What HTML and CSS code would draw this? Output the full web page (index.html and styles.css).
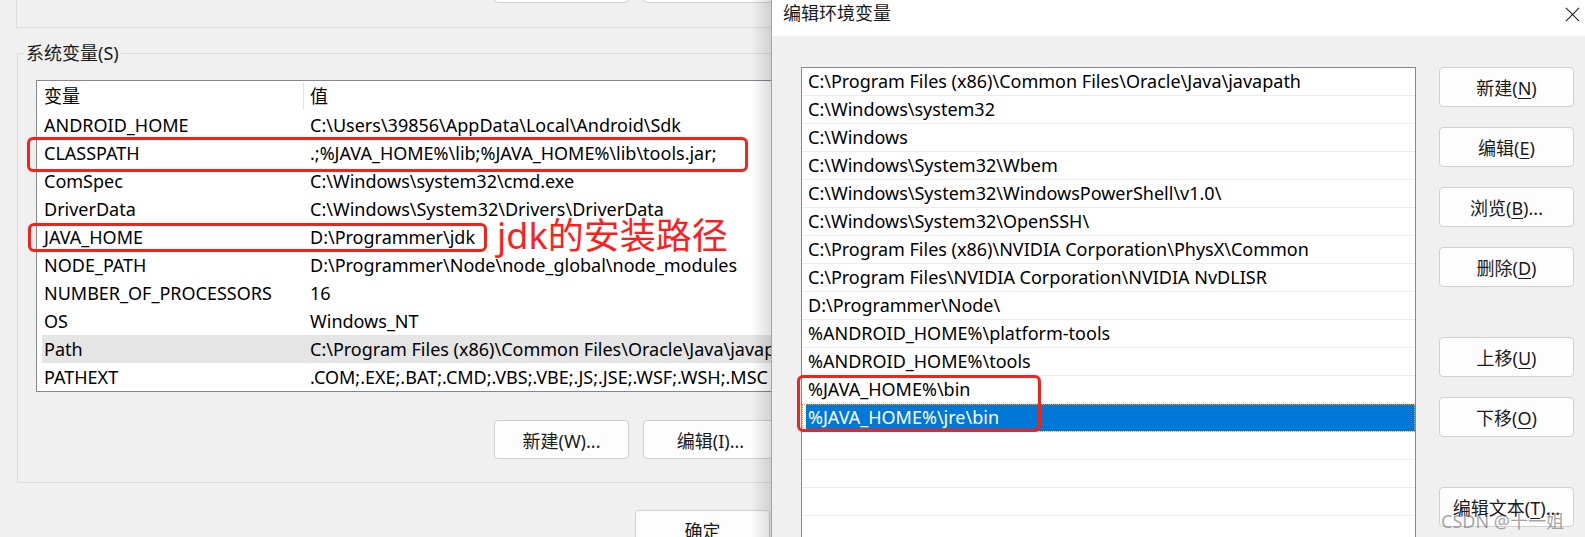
FILE: index.html
```html
<!DOCTYPE html>
<html lang="zh-CN">
  <head>
    <meta charset="UTF-8" />
    <title>环境变量</title>
    <link rel="stylesheet" href="styles.css">
  </head>
  <body>
    <div class="desk">
      <section class="env-dialog">
        <div class="user-group">
          <div class="btn-row">
            <button class="btn">新建(N)...</button>
            <button class="btn">编辑(E)...</button>
          </div>
        </div>

        <fieldset class="sys-group">
          <legend>系统变量(S)</legend>
          <div class="sys-body">
            <div class="var-list">
              <div class="var-head">
                <span class="col-name">变量</span>
                <span class="col-value">值</span>
              </div>
              <div class="var-row"><span class="col-name">ANDROID_HOME</span><span class="col-value">C:\Users\39856\AppData\Local\Android\Sdk</span></div>
              <div class="var-row"><span class="col-name">CLASSPATH</span><span class="col-value">.;%JAVA_HOME%\lib;%JAVA_HOME%\lib\tools.jar;</span></div>
              <div class="var-row"><span class="col-name">ComSpec</span><span class="col-value">C:\Windows\system32\cmd.exe</span></div>
              <div class="var-row"><span class="col-name">DriverData</span><span class="col-value">C:\Windows\System32\Drivers\DriverData</span></div>
              <div class="var-row"><span class="col-name">JAVA_HOME</span><span class="col-value">D:\Programmer\jdk</span></div>
              <div class="var-row"><span class="col-name">NODE_PATH</span><span class="col-value">D:\Programmer\Node\node_global\node_modules</span></div>
              <div class="var-row"><span class="col-name">NUMBER_OF_PROCESSORS</span><span class="col-value">16</span></div>
              <div class="var-row"><span class="col-name">OS</span><span class="col-value">Windows_NT</span></div>
              <div class="var-row is-hover"><span class="col-name">Path</span><span class="col-value">C:\Program Files (x86)\Common Files\Oracle\Java\javapath;C:\Windows\system32</span></div>
              <div class="var-row"><span class="col-name">PATHEXT</span><span class="col-value">.COM;.EXE;.BAT;.CMD;.VBS;.VBE;.JS;.JSE;.WSF;.WSH;.MSC</span></div>
            </div>
            <div class="btn-row">
              <button class="btn">新建(W)...</button>
              <button class="btn">编辑(I)...</button>
              <button class="btn">删除(L)</button>
            </div>
          </div>
        </fieldset>

        <div class="dialog-foot">
          <button class="btn">确定</button>
          <button class="btn">取消</button>
        </div>

        <!-- annotations drawn over the screenshot -->
        <div class="mark mark-classpath"></div>
        <div class="mark mark-java"></div>
        <div class="note">jdk的安装路径</div>
        <div class="shade"></div>
      </section>

      <section class="edit-dialog">
        <header class="titlebar">
          <span class="title">编辑环境变量</span>
          <svg class="close" viewBox="0 0 16 16">
            <line x1="1" y1="1" x2="15" y2="15"></line>
            <line x1="15" y1="1" x2="1" y2="15"></line>
          </svg>
        </header>

        <div class="edit-body">
          <div class="path-list">
            <div class="path-row">C:\Program Files (x86)\Common Files\Oracle\Java\javapath</div>
            <div class="path-row">C:\Windows\system32</div>
            <div class="path-row">C:\Windows</div>
            <div class="path-row">C:\Windows\System32\Wbem</div>
            <div class="path-row">C:\Windows\System32\WindowsPowerShell\v1.0\</div>
            <div class="path-row">C:\Windows\System32\OpenSSH\</div>
            <div class="path-row">C:\Program Files (x86)\NVIDIA Corporation\PhysX\Common</div>
            <div class="path-row">C:\Program Files\NVIDIA Corporation\NVIDIA NvDLISR</div>
            <div class="path-row">D:\Programmer\Node\</div>
            <div class="path-row">%ANDROID_HOME%\platform-tools</div>
            <div class="path-row">%ANDROID_HOME%\tools</div>
            <div class="path-row">%JAVA_HOME%\bin</div>
            <div class="path-row is-selected">%JAVA_HOME%\jre\bin</div>
            <div class="path-row"></div>
            <div class="path-row"></div>
            <div class="path-row"></div>
            <div class="path-row"></div>
          </div>

          <div class="side-btns">
            <button class="btn">新建(<u>N</u>)</button>
            <button class="btn">编辑(<u>E</u>)</button>
            <button class="btn">浏览(<u>B</u>)...</button>
            <button class="btn">删除(<u>D</u>)</button>
            <button class="btn btn-gap">上移(<u>U</u>)</button>
            <button class="btn">下移(<u>O</u>)</button>
            <button class="btn btn-gap">编辑文本(<u>T</u>)...</button>
          </div>
        </div>

        <div class="mark mark-bin"></div>
        <div class="watermark">CSDN @十一姐</div>
      </section>
    </div>
  </body>
</html>
```

FILE: styles.css
```css
* {
  margin: 0;
  padding: 0;
  box-sizing: border-box;
}

body {
  font-family: "Noto Sans", "Noto Sans CJK SC", sans-serif;
  font-size: 18px;
  color: #000000;
  background: #f0f0f0;
  overflow: hidden;
}

.desk {
  display: flex;
  width: 1585px;
  height: 537px;
  overflow: hidden;
}

/* shared button look */
.btn {
  font-family: inherit;
  font-size: 18px;
  color: #1a1a1a;
  background: #fdfdfd;
  border: 1px solid #d0d0d0;
  border-radius: 4px;
  width: 135px;
  height: 39px;
  flex: none;
}

.btn u {
  text-underline-offset: 3px;
}

.btn-row {
  display: flex;
  gap: 14px;
  padding-left: 458px;
}

/* ---------- left dialog ---------- */
.env-dialog {
  position: relative;
  flex: none;
  width: 771px;
  overflow: hidden;
  background: #f0f0f0;
}

.user-group {
  display: flow-root;
  width: 1100px;
  height: 28px;
  margin-left: 16px;
  border-left: 1px solid #dcdcdc;
  border-bottom: 1px solid #dcdcdc;
}

.user-group .btn-row {
  margin-top: -36px;
  padding-left: 477px;
}

.sys-group {
  width: 1100px;
  margin: 13px 0 0 17px;
  border: 1px solid #dcdcdc;
}

.sys-group legend {
  margin-left: 6px;
  padding: 0 2px;
  line-height: 24px;
  color: #1a1a1a;
}

.sys-body {
  padding: 15px 0 23px 18px;
}

.sys-body .btn-row {
  margin-top: 28px;
}

.var-list {
  width: 1060px;
  background: #ffffff;
  border: 1px solid #828790;
}

.var-head,
.var-row {
  display: flex;
  margin-left: 5px;
  white-space: nowrap;
}

.var-head {
  height: 30px;
  line-height: 30px;
}

.var-row {
  height: 28px;
  line-height: 28px;
}

.var-row.is-hover {
  background: #e5e5e5;
}

.col-name {
  width: 261px;
  padding-left: 2px;
  flex: none;
}

.col-value {
  padding-left: 7px;
}

.var-head .col-value {
  padding-left: 6px;
  border-left: 1px solid #e5e5e5;
  margin: 1px 0;
  line-height: 28px;
}

.dialog-foot {
  display: flex;
  gap: 14px;
  margin-top: 27px;
  padding-left: 635px;
}

.shade {
  position: absolute;
  top: 0;
  right: 0;
  width: 20px;
  height: 100%;
  background: linear-gradient(to right, rgba(0, 0, 0, 0), rgba(0, 0, 0, 0.13));
}

/* red annotation boxes */
.mark {
  position: absolute;
  border: 3px solid #f3221b;
  border-radius: 6px;
}

.mark-classpath {
  left: 27px;
  top: 137px;
  width: 721px;
  height: 35px;
}

.mark-java {
  left: 28px;
  top: 223px;
  width: 459px;
  height: 29px;
}

.note {
  position: absolute;
  left: 497px;
  top: 216px;
  font-size: 36px;
  line-height: 40px;
  color: #ff1d1d;
  white-space: nowrap;
}

/* ---------- right dialog ---------- */
.edit-dialog {
  position: relative;
  flex: 1;
  background: #f0f0f0;
  border-left: 1px solid #a3a3a3;
}

.titlebar {
  display: flex;
  align-items: flex-start;
  height: 36px;
  padding: 1px 5px 0 11px;
  background: #ffffff;
}

.title {
  line-height: 24px;
  color: #1a1a1a;
}

.close {
  width: 15px;
  height: 15px;
  margin: 6px 0 0 auto;
  fill: none;
  stroke: #1a1a1a;
  stroke-width: 1.1;
}

.edit-body {
  display: flex;
  align-items: flex-start;
  gap: 23px;
  padding: 31px 0 0 29px;
}

.path-list {
  width: 615px;
  height: 520px;
  flex: none;
  background: #ffffff;
  border: 1px solid #828790;
}

.path-row {
  height: 28px;
  line-height: 27px;
  padding-left: 6px;
  border-bottom: 1px solid #ededed;
  white-space: nowrap;
}

.path-row.is-selected {
  color: #ffffff;
  background: linear-gradient(#0078d7, #0078d7) 4px 0 / calc(100% - 4px) 100% no-repeat;
  outline: 1px dotted #c9a46a;
  outline-offset: -1px;
}

.side-btns {
  display: flex;
  flex-direction: column;
  gap: 20px;
}

.side-btns .btn {
  height: 40px;
}

.side-btns .btn-gap {
  margin-top: 30px;
}

.mark-bin {
  left: 25px;
  top: 375px;
  width: 244px;
  height: 57px;
}

.watermark {
  position: absolute;
  left: 669px;
  top: 507px;
  font-size: 18px;
  color: rgba(105, 105, 105, 0.6);
  white-space: nowrap;
}
```
